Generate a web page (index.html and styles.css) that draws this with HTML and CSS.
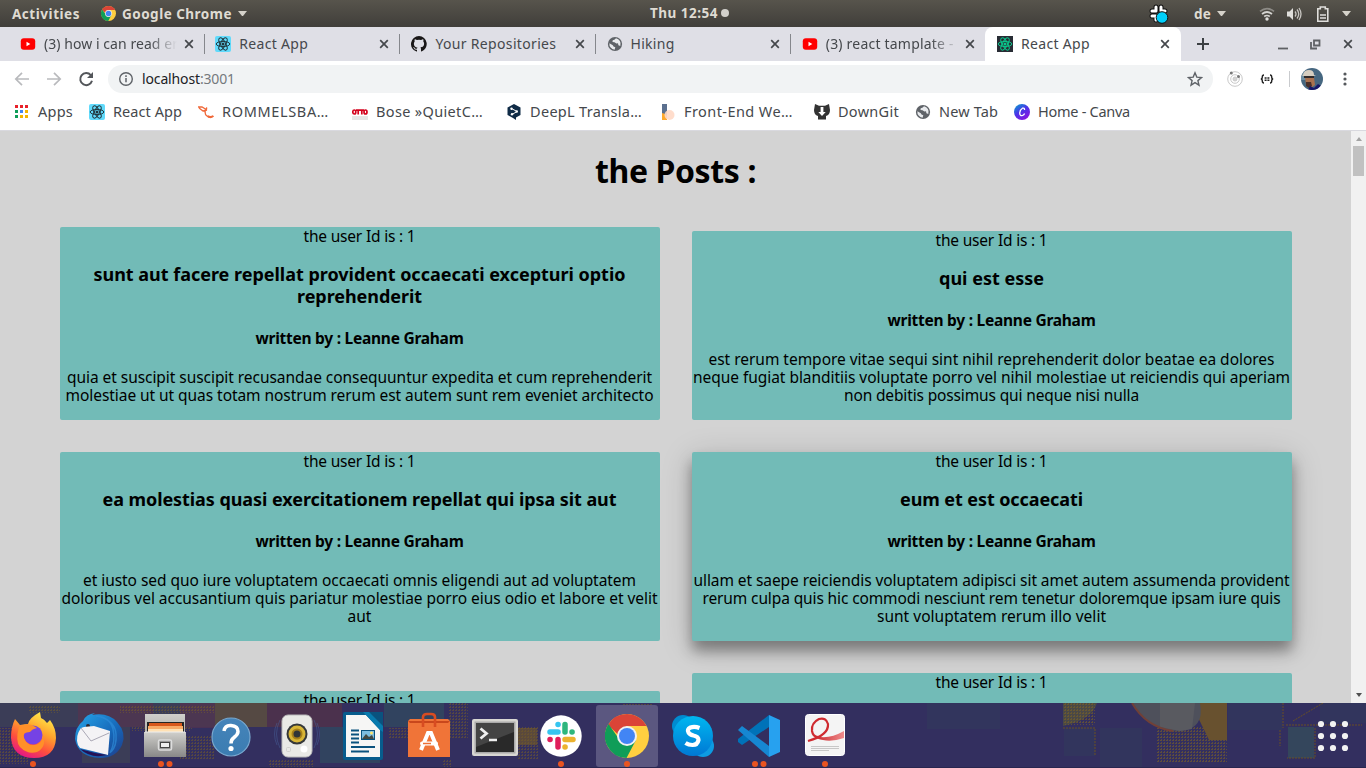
FILE: index.html
```html
<!DOCTYPE html>
<html lang="en">
<head>
<meta charset="utf-8">
<title>React App</title>
<link rel="stylesheet" href="styles.css">
</head>
<body>
<svg class="defs" width="0" height="0">
  <defs>
    <symbol id="react" viewBox="0 0 16 16">
      <g fill="none" stroke="currentColor" stroke-width="1">
        <ellipse cx="8" cy="8" rx="6.8" ry="2.6"/>
        <ellipse cx="8" cy="8" rx="6.8" ry="2.6" transform="rotate(60 8 8)"/>
        <ellipse cx="8" cy="8" rx="6.8" ry="2.6" transform="rotate(120 8 8)"/>
      </g>
      <circle cx="8" cy="8" r="1.5" fill="currentColor"/>
    </symbol>
    <symbol id="youtube" viewBox="0 0 16 16"><rect x=".8" y="2.3" width="14.4" height="11.4" rx="3" fill="#f00"/><path d="M6.5 5.8v4.4L10.3 8z" fill="#fff"/></symbol>
    <symbol id="close" viewBox="0 0 10 10"><path d="M1.2 1.2l7.6 7.6M8.8 1.2L1.2 8.8" stroke="#45484c" stroke-width="1.7"/></symbol>
    <symbol id="globe" viewBox="0 0 16 16"><circle cx="8" cy="8" r="7.1" fill="#5f6368"/><path d="M2.4 7.2L5.8 9.2 6.5 10.4 8.3 11.2 7.6 13.7A5.8 5.8 0 012.4 7.2zM9 2.3L7.4 3.8 5.7 4.3 5.5 6 7.5 6.2 9.4 7.4 11 7.2 11.4 9.3 13.3 9.9A5.8 5.8 0 009 2.3z" fill="#e8eaed"/></symbol>
    <symbol id="chrome" viewBox="0 0 44 44">
      <circle cx="22" cy="22" r="22" fill="#ffcf40"/>
      <path d="M3 11A22 22 0 0122 0 22 22 0 0141.6 12H22L12.5 20z" fill="#db4437"/>
      <path d="M3.500 10A22 22 0 0021.500 44l9.500-18-17-1z" fill="#0f9d58"/>
      <circle cx="22" cy="22" r="10" fill="#f1f1f1"/><circle cx="22" cy="22" r="8" fill="#4285f4"/>
    </symbol>
  </defs>
</svg>

<header class="topbar">
  <b class="activities" data-width="68">Activities</b>
  <svg class="app-icon" width="15" height="15"><use href="#chrome"/></svg>
  <b data-width="110">Google Chrome</b>
  <i class="caret"></i>
  <div class="clock"><b data-width="68">Thu 12:54</b><i></i></div>
  <div class="tray">
    <svg width="22" height="22" viewBox="0 0 22 22"><g stroke="#111" stroke-width="5" stroke-linecap="round"><path d="M8 4v4M13 4v4M4 8h4M14 8h3M4 13h4M8 15v2"/></g><g stroke="#fff" stroke-width="3" stroke-linecap="round"><path d="M8 4v4M13 4v4M4 8h4M14 8h3M4 13h4M8 15v2"/></g><circle cx="14" cy="14.5" r="5.8" fill="#00cffa" stroke="#111"/></svg>
    <b class="lang" data-width="17">de</b><i class="caret"></i>
    <svg class="wifi" width="16" height="16" viewBox="0 0 16 16" fill="none" stroke-width="1.7"><path d="M1 5.3Q8-.2 15 5.3" stroke="#8d8b86"/><path d="M3 8q5-4 10 0M5.2 10.5q2.8-2 5.6 0" stroke="#d5d4d1"/><circle cx="8" cy="13" r="1.7" fill="#dfdedb"/></svg>
    <svg class="volume" width="16" height="16" viewBox="0 0 16 16"><path d="M1 5.5h2.5L7 2v12l-3.500-3.500H1z" fill="#dfdedb"/><path d="M9 5.500q2 2.500 0 5M11 3.500q3.500 4.500 0 9M13 2q4 6 0 12" fill="none" stroke="#c7c5c1" stroke-width="1.300"/></svg>
    <svg class="battery" width="14" height="16" viewBox="0 0 14 16"><path d="M1.800 2.800h2.500V1h5v1.800h2.500v12.400h-10z" fill="none" stroke="#dfdedb" stroke-width="1.600"/><path d="M4 9h6M4 12h6" stroke="#dfdedb" stroke-width="1.500"/></svg>
    <i class="caret"></i>
  </div>
</header>

<nav class="tabs">
  <div class="tab"><svg width="16" height="16"><use href="#youtube"/></svg><span class="title fade"><span data-width="134">(3) how i can read er</span></span><svg class="x" width="10" height="10"><use href="#close"/></svg></div>
  <div class="tab"><svg class="react-blue" width="16" height="16"><use href="#react"/></svg><span class="title"><span data-width="69">React App</span></span><svg class="x" width="10" height="10"><use href="#close"/></svg></div>
  <div class="tab"><svg width="16" height="16" viewBox="0 0 16 16"><path fill="#191717" d="M8 0a8 8 0 00-2.500 15.600c.4.100.5-.2.500-.4v-1.500c-2.200.5-2.700-.9-2.700-.9-.4-.9-.9-1.200-.9-1.200-.7-.5.100-.5.100-.5.800.1 1.200.8 1.200.8.700 1.200 1.900.9 2.300.7.100-.5.300-.9.500-1.100-1.800-.2-3.600-.9-3.600-4 0-.9.300-1.600.8-2.100-.1-.2-.4-1 .1-2.100 0 0 .7-.2 2.200.8a7.500 7.500 0 014 0c1.500-1 2.200-.8 2.200-.8.400 1.100.2 1.900.1 2.100.5.600.8 1.300.8 2.100 0 3.100-1.900 3.700-3.700 3.900.3.300.6.800.6 1.500v2.200c0 .2.100.5.500.4A8 8 0 008 0z"/></svg><span class="title"><span data-width="121">Your Repositories</span></span><svg class="x" width="10" height="10"><use href="#close"/></svg></div>
  <div class="tab"><svg width="16" height="16"><use href="#globe"/></svg><span class="title"><span data-width="44">Hiking</span></span><svg class="x" width="10" height="10"><use href="#close"/></svg></div>
  <div class="tab"><svg width="16" height="16"><use href="#youtube"/></svg><span class="title fade"><span data-width="128">(3) react tamplate -</span></span><svg class="x" width="10" height="10"><use href="#close"/></svg></div>
  <div class="tab active"><svg class="react-dark" width="16" height="16"><use href="#react"/></svg><span class="title"><span data-width="69">React App</span></span><svg class="x" width="10" height="10"><use href="#close"/></svg></div>
  <svg class="new-tab" width="12" height="12" viewBox="0 0 12 12"><path d="M6 0v12M0 6h12" stroke="#3c4043" stroke-width="2"/></svg>
  <div class="window-buttons">
    <svg width="10" height="12" viewBox="0 0 10 12"><path d="M0 10.500h10" stroke="#5f6165" stroke-width="1.800"/></svg>
    <svg width="11" height="12" viewBox="0 0 11 12" fill="none" stroke="#5f6165"><path d="M4 2.500h5.500v5H4z" stroke-width="1.800"/><path d="M1 4v6.500h6" stroke-width="1.800"/></svg>
    <svg width="10" height="10"><use href="#close"/></svg>
  </div>
</nav>

<div class="toolbar">
  <svg width="32" height="16" viewBox="0 0 32 16" fill="none" stroke="#b9babd" stroke-width="1.700"><path d="M23 8H10M16 1.800L9.800 8l6.200 6.200"/></svg>
  <svg width="32" height="16" viewBox="0 0 32 16" fill="none" stroke="#b9babd" stroke-width="1.700"><path d="M9 8h13M16 1.800L22.200 8 16 14.200"/></svg>
  <svg width="32" height="16" viewBox="0 0 32 16" fill="none" stroke="#53565a" stroke-width="2"><path d="M20.800 4.200A6 6 0 1022 9.800"/><path d="M23 1v6h-6z" fill="#53565a" stroke="none"/></svg>
  <div class="omnibox">
    <svg width="16" height="16" viewBox="0 0 16 16"><circle cx="8" cy="8" r="6.300" fill="none" stroke="#5f6368" stroke-width="1.400"/><path d="M8 7v4.200M8 4.300V6" stroke="#5f6368" stroke-width="1.500"/></svg>
    <span class="url" data-width="93">localhost<em>:3001</em></span>
    <svg class="star" width="16" height="16" viewBox="0 0 16 16"><path d="M8 1.800l1.800 4.300 4.700.4-3.600 3.100 1.100 4.600L8 11.700l-4 2.500 1.100-4.600-3.600-3.100 4.700-.4z" fill="none" stroke="#5f6368" stroke-width="1.400"/></svg>
  </div>
  <svg class="ext" width="18" height="18" viewBox="0 0 18 18" fill="none" stroke="#c9c9c9"><circle cx="9" cy="9" r="7.300"/><circle cx="9" cy="9" r="4.300"/><circle cx="9" cy="9" r="2" fill="#d3d3d3"/><circle cx="5.300" cy="3" r="1.500" fill="#777" stroke="none"/><circle cx="12.500" cy="6.500" r="1.500" fill="#777" stroke="none"/></svg>
  <svg class="json" width="14" height="10" viewBox="0 0 14 10" fill="none" stroke="#222" stroke-width="1.400"><path d="M4 1Q2.300 1 2.300 3T.8 5q1.500 0 1.500 2T4 9M10 1q1.700 0 1.700 2t1.500 2q-1.500 0-1.500 2T10 9M4.600 4h2m.8 0h2M4.600 6.300h2m.8 0h2"/></svg>
  <i class="divider"></i>
  <svg class="avatar" width="22" height="22" viewBox="0 0 22 22"><rect width="22" height="22" fill="#466780"/><path d="M0 3h6v9H0z" fill="#6f8fa2"/><path d="M4 9h9l1 8-4 3-5-3z" fill="#a9714f"/><path d="M2 7q1-5 6-5t5 5l2 1H1z" fill="#d6cec0"/><path d="M3 8h10v2H3z" fill="#302b2b"/><path d="M5 14h5l1 4-3 2-3-2z" fill="#4a3029"/><path d="M7 22l2-4 4 2 4-4 5 3v3z" fill="#17176a"/></svg>
  <svg class="menu" width="4" height="14" viewBox="0 0 4 14" fill="#55585c"><circle cx="2" cy="2" r="1.600"/><circle cx="2" cy="7" r="1.600"/><circle cx="2" cy="12" r="1.600"/></svg>
</div>

<div class="bookmarks">
  <div class="mark w-apps"><svg width="16" height="16" viewBox="0 0 16 16"><path fill="#e8212a" d="M1 1h3v3H1zM6 1h3v3H6zM11 1h3v3h-3z"/><path fill="#0f9d58" d="M1 6h3v3H1zM1 11h3v3H1z"/><path fill="#4285f4" d="M6 6h3v3H6z"/><path fill="#f4b400" d="M11 6h3v3h-3zM6 11h3v3H6zM11 11h3v3h-3z"/></svg><span data-width="35">Apps</span></div>
  <div class="mark w-react"><svg class="react-blue" width="16" height="16"><use href="#react"/></svg><span data-width="69">React App</span></div>
  <div class="mark w-long"><svg width="16" height="16" viewBox="0 0 16 16" fill="none" stroke="#f0693a" stroke-width="1.300"><path d="M0 3h4l5 3M1 4l4 3 4-1M9 3.500Q5 9 9 12t6 0"/><path d="M9.500 12q3 2 6 0" stroke-width="2"/></svg><span data-width="107">ROMMELSBA…</span></div>
  <div class="mark w-long"><svg width="16" height="16" viewBox="0 0 16 16"><path d="M0 12h16v4H0z" fill="#e6e6e6"/><g fill="none" stroke="#d4021d" stroke-width="1.700"><ellipse cx="2.300" cy="8" rx="1.500" ry="2"/><ellipse cx="13.500" cy="8" rx="1.500" ry="2"/><path d="M4 6.200h8M6.200 6v4.600M9.800 6v4.600"/></g></svg><span data-width="107">Bose »QuietC…</span></div>
  <div class="mark w-long"><svg width="16" height="16" viewBox="0 0 16 16"><path d="M8 0l6.500 3.500v7.500L10 13.500V16l-3-2-5.500-3V3.500z" fill="#0f2b46"/><path d="M5.500 4.500l5.500 3-5 3" fill="none" stroke="#fff"/><g fill="#fff"><circle cx="5.500" cy="4.700" r="1.200"/><circle cx="10.800" cy="7.500" r="1.200"/><circle cx="6" cy="10.300" r="1.200"/></g></svg><span data-width="112">DeepL Transla…</span></div>
  <div class="mark w-long"><svg width="16" height="16" viewBox="0 0 16 16"><path d="M2 0h5v16H2z" fill="#5b708f"/><path d="M2 9q6 1 5 7H2z" fill="#ffa92d"/><circle cx="9.500" cy="11" r="5" fill="#ffd9c7" opacity=".9"/></svg><span data-width="109">Front-End We…</span></div>
  <div class="mark w-downgit"><svg width="16" height="16" viewBox="0 0 16 16"><path d="M1 0l4 1.700h6L15 0l1 6q0 5-4 6v3.500H4V12Q0 11 0 6z" fill="#333"/><path d="M6.600 3h2.800v5h2.300L8 12 4.300 8h2.300z" fill="#fff"/></svg><span data-width="61">DownGit</span></div>
  <div class="mark w-newtab"><svg width="16" height="16"><use href="#globe"/></svg><span data-width="59">New Tab</span></div>
  <div class="mark"><svg width="16" height="16" viewBox="0 0 16 16"><defs><linearGradient id="canva" x1="0" y1="0" x2=".7" y2="1"><stop stop-color="#0ac"/><stop offset=".5" stop-color="#4a35e8"/><stop offset="1" stop-color="#8a13e0"/></linearGradient></defs><circle cx="8" cy="8" r="8" fill="url(#canva)"/><path d="M10.600 6Q10.500 3.500 8.400 4.200 6 5.500 5.700 9q.2 3.300 2.800 2.500 1.500-.6 2.100-2" fill="none" stroke="#fff" stroke-width="1.300"/></svg><span data-width="92">Home - Canva</span></div>
</div>

<div class="viewport">
  <main class="page">
    <h1><span data-width="161">the Posts :</span></h1>
    <div class="posts">
      <article class="post">
        <div><span data-width="112">the user Id is : 1</span></div>
        <h3><span data-width="532">sunt aut facere repellat provident occaecati excepturi optio</span><br><span data-width="125">reprehenderit</span></h3>
        <h4><span data-width="208">written by : Leanne Graham</span></h4>
        <p><span data-width="585">quia et suscipit suscipit recusandae consequuntur expedita et cum reprehenderit</span><br><span data-width="588">molestiae ut ut quas totam nostrum rerum est autem sunt rem eveniet architecto</span></p>
      </article>
      <article class="post">
        <div><span data-width="112">the user Id is : 1</span></div>
        <h3><span data-width="105">qui est esse</span></h3>
        <h4><span data-width="208">written by : Leanne Graham</span></h4>
        <p><span data-width="566">est rerum tempore vitae sequi sint nihil reprehenderit dolor beatae ea dolores</span><br><span data-width="597">neque fugiat blanditiis voluptate porro vel nihil molestiae ut reiciendis qui aperiam</span><br><span data-width="295">non debitis possimus qui neque nisi nulla</span></p>
      </article>
      <article class="post">
        <div><span data-width="112">the user Id is : 1</span></div>
        <h3><span data-width="514">ea molestias quasi exercitationem repellat qui ipsa sit aut</span></h3>
        <h4><span data-width="208">written by : Leanne Graham</span></h4>
        <p><span data-width="553">et iusto sed quo iure voluptatem occaecati omnis eligendi aut ad voluptatem</span><br><span data-width="596">doloribus vel accusantium quis pariatur molestiae porro eius odio et labore et velit</span><br><span data-width="24">aut</span></p>
      </article>
      <article class="post hovered">
        <div><span data-width="112">the user Id is : 1</span></div>
        <h3><span data-width="183">eum et est occaecati</span></h3>
        <h4><span data-width="208">written by : Leanne Graham</span></h4>
        <p><span data-width="596">ullam et saepe reiciendis voluptatem adipisci sit amet autem assumenda provident</span><br><span data-width="578">rerum culpa quis hic commodi nesciunt rem tenetur doloremque ipsam iure quis</span><br><span data-width="229">sunt voluptatem rerum illo velit</span></p>
      </article>
      <article class="post short"><div><span data-width="112">the user Id is : 1</span></div></article>
      <article class="post tall"><div><span data-width="112">the user Id is : 1</span></div></article>
    </div>
  </main>
  <div class="scrollbar"><i class="up"></i><i class="thumb"></i><i class="down"></i></div>
</div>

<footer class="dock">
  <svg class="wallpaper" width="1366" height="65" viewBox="0 0 1366 65">
    <defs>
      <pattern id="weave" width="3" height="3" patternUnits="userSpaceOnUse"><path d="M0 0h1v2H0zM2 1h1v1H2z" fill="#81651f"/></pattern>
    </defs>
    <rect width="1366" height="65" fill="#332f5f"/>
    <path d="M0 0h215v24H130v36h-48V24H0z" fill="#3b3d57"/>
    <path d="M78 0h75v24H78zM180 0h35v25h-35z" fill="#56334e" opacity=".65"/>
    <path d="M215 0h52v24h-52z" fill="#554943"/><path d="M267 0h75v24h-75z" fill="#4b314d"/>
    <path d="M320 24h60v36h-60zM384 0h60v24h-60z" fill="#31435f"/>
    <path d="M0 25h28v36H0zM28 2h32v8H28zM120 3h95v7h-95zM132 23h60v5h-60zM180 32h35v25h-35zM268 57h45v8h-45zM388 25h80v10h-80zM448 0h20v25h-20zM518 24h20v32h-20zM443 56h8v9h-8zM622 1h30v16h-30z" fill="url(#weave)" opacity=".45"/>
    <path d="M518 25h19v17h-19z" fill="#745b24" opacity=".6"/>
    <path d="M1063 0h34q-5 17-34 23z" fill="#4a4846"/><path d="M1063 0h32v22h-32zM1157 24h70v35h-70z" fill="url(#weave)" opacity=".55"/>
    <path d="M1191 0h36v37h-18z" fill="#68512f"/>
    <path d="M1064 25h31v28h-31zM1100 25h42v40h-42zM1228 0h54v27h-54zM927 0h73v26h-73zM1320 0h46v20h-46z" fill="#30425c" opacity=".35"/>
    <path d="M1288 24h26v31h-26z" fill="#34465c"/>
    <path d="M1132 0q16 28 48 28 25-2 20-28z" fill="#4e505b"/><path d="M1160 0h35l-3 26-12 2-20-4z" fill="#595a60"/><path d="M1132 0q14 24 41 28" fill="none" stroke="#704037" stroke-width="2"/>
    <path d="M1286 22h76M1283 0v25M1315 25v30h-28M1293 18l30-18M1063 25h32v28M1280 27v16" fill="none" stroke="#685024" stroke-dasharray="2 1"/>
    <path d="M0 64.500h1366" stroke="#29264f"/>
  </svg>

  <div class="launcher dots-1"><svg width="66" height="65" viewBox="0 0 66 65"><defs><linearGradient id="fox" x1=".8" y1="0" x2=".3" y2="1"><stop stop-color="#fff44f"/><stop offset=".4" stop-color="#ffa22c"/><stop offset=".7" stop-color="#ff503d"/><stop offset="1" stop-color="#e31587"/></linearGradient></defs><path d="M15 16l5 6q5-1 8-1 1-6 12-12l1 6q3 1 6 5l3-3q6 8 6 18-1 20-22 20-21 0-23-20 0-11 4-19z" fill="url(#fox)"/><circle cx="33" cy="32" r="9.500" fill="#7542e5"/><path d="M19 24q6-4 13-2l5 3q-5 1-7 4-8 0-6 6 3 8 11 7 8-2 8-10 4 12-6 17-9 3-17-5-5-6-1-20z" fill="#ff9029"/></svg></div>
  <div class="launcher"><svg width="66" height="65" viewBox="0 0 66 65"><defs><linearGradient id="bird" x2="1" y2="1"><stop stop-color="#26a7eb"/><stop offset=".6" stop-color="#1666b7"/><stop offset="1" stop-color="#203b87"/></linearGradient></defs><path d="M9 36q0-12 8-18 3-7 12-8l-3 2q16-3 25 7 10 11 5 23-6 13-22 13-22-1-25-19z" fill="url(#bird)"/><path d="M30 13q14 1 17 13t-3 24M35 14q14 5 15 17t-5 18" fill="none" stroke="#2e8bd8" stroke-width="1.500" opacity=".7"/><circle cx="22" cy="23" r="2" fill="#2d2930"/><path d="M15 25q-6 8-3 17l2 3 28 7 2-24-16-5-10 1z" fill="#f4f3f5"/><path d="M15 25l10 13 18-8" fill="none" stroke="#aaa8b5"/><path d="M14 46q11 10 27 6l-12-2z" fill="#251254"/></svg></div>
  <div class="launcher dots-2"><svg width="66" height="65" viewBox="0 0 66 65"><defs><linearGradient id="metal" x2="0" y2="1"><stop stop-color="#d0cfcb"/><stop offset="1" stop-color="#888"/></linearGradient></defs><path d="M13 11h40v43H13z" fill="url(#metal)"/><path d="M15 19h37v10H15z" fill="#252525"/><path d="M17 20h33v9H17z" fill="#d8581d"/><path d="M16 23h35v6H16z" fill="#f8aa67"/><path d="M16 26h35v3H16z" fill="#ffe1b4"/><path d="M12 29h42v25H12z" fill="url(#metal)"/><path d="M13 29h40" stroke="#eee"/><rect x="26.500" y="37" width="13" height="10" rx="1.500" fill="#999" stroke="#ddd" stroke-width="1.500"/><rect x="28.500" y="39.500" width="9" height="5" fill="#eee" stroke="#444"/></svg></div>
  <div class="launcher"><svg width="66" height="65" viewBox="0 0 66 65"><defs><linearGradient id="helpg" x2="0" y2="1"><stop stop-color="#4584ba"/><stop offset="1" stop-color="#3b7cb1"/></linearGradient></defs><circle cx="33" cy="34" r="19" fill="url(#helpg)" stroke="#78a8cf" stroke-width="1.200"/><path d="M26 28q1-6 7-5.500 7 .5 7 6 0 3-4 6-3 2-3 6" fill="none" stroke="#fff" stroke-width="3.500"/><circle cx="33" cy="45.500" r="2.600" fill="#fff"/></svg></div>
  <div class="launcher"><svg width="66" height="65" viewBox="0 0 66 65"><g fill="none" stroke="#4a679f" opacity=".45"><path d="M16 17q-7 14 0 28M50 17q7 14 0 28M13 20q-5 11 0 22M53 20q5 11 0 22"/></g><rect x="18" y="12" width="30" height="42" rx="6" fill="#e9e9e6" stroke="#bbb"/><circle cx="33" cy="31" r="10.500" fill="#35383a"/><circle cx="33" cy="31" r="8.500" fill="#d8b536"/><circle cx="33" cy="31" r="5.500" fill="#a67f19"/><circle cx="33" cy="31" r="3.500" fill="#303438"/><circle cx="40" cy="46" r="3.500" fill="#fff"/><rect x="22.500" y="44.500" width="4" height="4" rx="1" fill="none" stroke="#d1d1ce"/></svg></div>
  <div class="launcher"><svg width="66" height="65" viewBox="0 0 66 65"><rect x="13" y="9" width="40" height="48" rx="2" fill="#075c8d"/><path d="M16 12h20l14 15v27H16z" fill="#f6f6f5"/><path d="M33 9h20v20l-3-2-14-15z" fill="#087aad"/><path d="M39 9h14v14z" fill="#0a527e"/><path d="M21 27.500h8M21 31.500h8M21 35.500h8M21 39.500h8M21 44h24M21 48.500h18" stroke="#0a527e" stroke-width="1.800"/><rect x="31.500" y="27.500" width="13" height="9" fill="#7dbde0" stroke="#0a527e"/><path d="M32 36l4-5 3 3 3-2 2 4z" fill="#424842"/><circle cx="41.500" cy="30" r="1.500" fill="#ffe46b"/></svg></div>
  <div class="launcher"><svg width="66" height="65" viewBox="0 0 66 65"><path d="M12 18l2-2h38l2 2v36H12z" fill="#f07438"/><path d="M12 18h42l-2 2H14z" fill="#c9471c"/><path d="M27 24V14q0-3 4-3h4q4 0 4 3v10" fill="none" stroke="#d84c21" stroke-width="2.600"/><path d="M25 47l7-17h3l7 17" fill="none" stroke="#fff" stroke-width="4"/><rect x="24" y="38.500" width="18" height="4" rx="2" fill="#fff"/><path d="M27 40.500h8" stroke="#ed6f35" stroke-width="1.500"/></svg></div>
  <div class="launcher"><svg width="66" height="65" viewBox="0 0 66 65"><rect x="10" y="16" width="46" height="37" rx="2" fill="#d8d7d3"/><rect x="12.500" y="18.500" width="41" height="32" fill="#aaa"/><rect x="14" y="20" width="38" height="29" fill="#292929"/><path d="M14 20h38v9L14 44z" fill="#444"/><path d="M18.500 25.500l6 5-6 5" fill="none" stroke="#eee" stroke-width="2.800"/><path d="M27 37h8" stroke="#eee" stroke-width="2.500"/></svg></div>
  <div class="launcher dots-1"><svg width="66" height="65" viewBox="0 0 66 65"><circle cx="33" cy="33" r="20.700" fill="#fff"/><g stroke-width="5.500" stroke-linecap="round"><path d="M22 29h8M30 21.500h.1" stroke="#36c5f0"/><path d="M37 21.500V29M44 29h.1" stroke="#2eb67d"/><path d="M30 36.500V44M22 36.500h.1" stroke="#e01e5a"/><path d="M37 36.500h8M37 44h.1" stroke="#ecb22e"/></g></svg></div>
  <div class="launcher dots-1 focused"><svg width="66" height="65" viewBox="0 0 66 65"><svg x="11" y="11" width="44" height="44"><use href="#chrome"/></svg></svg></div>
  <div class="launcher"><svg width="66" height="65" viewBox="0 0 66 65"><defs><linearGradient id="sky" x2="0" y2="1"><stop stop-color="#00b7f0"/><stop offset="1" stop-color="#0078d4"/></linearGradient></defs><circle cx="23" cy="23" r="11" fill="#008bd0"/><circle cx="43" cy="43" r="11" fill="#0d9be2"/><circle cx="33" cy="33" r="20" fill="url(#sky)"/><path d="M39.500 25q-5-2-9-.5-4 2-2 5 1 2 5 3 5 1 5 4.500-1 5-6 5-4 0-7-2" fill="none" stroke="#fff" stroke-width="4.200"/></svg></div>
  <div class="launcher dots-2"><svg width="66" height="65" viewBox="0 0 66 65"><path d="M43 12v12L16 42l-4-3v-3z" fill="#0072b8"/><path d="M12 27l4-4 27 20v11z" fill="#1687d2"/><path d="M43 12l11 5v32l-11 5z" fill="#27a1ef"/></svg></div>
  <div class="launcher dots-1"><svg width="66" height="65" viewBox="0 0 66 65"><defs><linearGradient id="ribbon"><stop stop-color="#c9252b"/><stop offset="1" stop-color="#ef8c8c"/></linearGradient></defs><rect x="13.500" y="11.500" width="39" height="41" rx="3" fill="#f4f4f4" stroke="#fff"/><path d="M24 33q12 4 28-5v7q-12 4-21 2-6-1-8-3z" fill="url(#ribbon)"/><path d="M16 38Q37 32 36 21q-2-7-9-5-8 4-7 12 1 6 6 6" fill="none" stroke="#cf2b30" stroke-width="2.200"/><path d="M19 43.500h28M19 45.500h28M19 47.500h18" stroke="#c7c7c7"/></svg></div>
  <svg class="all-apps" width="32" height="32" viewBox="0 0 32 32" fill="#f2f2f2"><circle cx="4" cy="4" r="3.100"/><circle cx="16" cy="4" r="3.100"/><circle cx="28" cy="4" r="3.100"/><circle cx="4" cy="16" r="3.100"/><circle cx="16" cy="16" r="3.100"/><circle cx="28" cy="16" r="3.100"/><circle cx="4" cy="28" r="3.100"/><circle cx="16" cy="28" r="3.100"/><circle cx="28" cy="28" r="3.100"/></svg>
</footer>
<script src="fit.js"></script>
</body>
</html>
```
FILE: styles.css
```css
* { box-sizing: border-box; }
body {
  margin: 0;
  width: 1366px;
  height: 768px;
  overflow: hidden;
  display: flex;
  flex-direction: column;
  font-family: "Noto Sans", "Open Sans", sans-serif;
}
svg { display: block; flex: none; }
.defs { display: none; }
[data-width] { display: inline-block; white-space: pre; }

/* Desktop panel */
.topbar {
  position: relative;
  flex: none;
  height: 27px;
  display: flex;
  align-items: center;
  padding-left: 12px;
  background: linear-gradient(#57544c, #403e3a);
  color: #dfdbd2;
  font-size: 13.500px;
  line-height: 26px;
}
.app-icon { margin: 0 6px 0 21px; }
.caret {
  width: 9px;
  border: 4.5px solid transparent;
  border-top: 5px solid #d5d2ca;
  border-bottom: 0;
  margin-left: 6px;
}
.clock {
  position: absolute;
  left: 650px;
  top: 0;
  display: flex;
  align-items: center;
  gap: 3px;
}
.clock i { width: 8px; height: 8px; border-radius: 50%; background: #d2d0cb; }
.tray { margin-left: auto; display: flex; align-items: center; padding-right: 15px; }
.lang { margin-left: 24px; }
.wifi { margin-left: 33px; }
.volume { margin-left: 11px; }
.battery { margin-left: 14px; }
.battery + .caret { margin-left: 12px; }

/* Tab strip */
.tabs {
  flex: none;
  height: 34px;
  display: flex;
  align-items: stretch;
  padding-left: 10px;
  background: #dfdfe6;
}
.tab {
  position: relative;
  width: 195.200px;
  display: flex;
  align-items: center;
  padding: 0 11px 0 10px;
  font-size: 14px;
  color: #45484c;
}
.tab:nth-child(n+3) { padding-left: 11px; }
.tab:not(.active)::after {
  content: "";
  position: absolute;
  right: 0;
  top: 7px;
  width: 1px;
  height: 20px;
  background: #85878c;
}
.tab:nth-child(5)::after { display: none; }
.title { width: 133px; margin-left: 8px; margin-right: 5px; overflow: hidden; line-height: 22px; }
.tab .x { margin-left: auto; }
.fade { -webkit-mask-image: linear-gradient(90deg, #000 105px, transparent 133px); mask-image: linear-gradient(90deg, #000 105px, transparent 133px); }
.active { width: 196px; margin-left: -1px; background: #fff; border-radius: 8px 8px 0 0; }
.tab.active { padding-left: 12px; }
.react-blue { background: #61dafb; color: #20353c; border-radius: 2px; }
.react-dark { background: #282c34; color: #09c98d; }
.new-tab { margin: 11px 0 0 16px; }
.window-buttons { margin-left: auto; display: flex; align-items: center; gap: 22px; padding-right: 13px; }

/* Address row */
.toolbar {
  flex: none;
  height: 36px;
  display: flex;
  align-items: center;
  padding-left: 6px;
  background: #fff;
}
.omnibox {
  width: 1105px;
  height: 28px;
  margin-left: 6px;
  display: flex;
  align-items: center;
  padding: 0 10px;
  border-radius: 14px;
  background: #f1f3f4;
  font-size: 14px;
  color: #202124;
}
.url { margin-left: 8px; padding-bottom: 1px; }
.url em { font-style: normal; color: #75797d; }
.star { margin-left: auto; }
.ext { margin-left: 13px; }
.json { margin-left: 16px; }
.divider { width: 1px; height: 16px; margin-left: 15px; background: #c9cbce; }
.avatar { margin-left: 11px; border-radius: 50%; }
.menu { margin-left: 20px; }

/* Bookmarks bar */
.bookmarks {
  flex: none;
  height: 34px;
  display: flex;
  align-items: center;
  padding: 0 0 3px 14px;
  background: #fff;
  border-bottom: 1px solid #d9d9df;
  font-size: 14.500px;
  line-height: 20px;
  color: #45484c;
}
.mark { display: flex; align-items: center; gap: 8px; }
.mark span { padding-bottom: 2px; }
.w-apps { width: 75px; }
.w-react { width: 109px; }
.w-long { width: 154px; }
.w-downgit { width: 101px; }
.w-newtab { width: 99px; }

/* Page */
.viewport { flex: none; height: 572px; display: flex; overflow: hidden; }
.page { flex: 1; background: #d3d3d3; text-align: center; color: #000; overflow: hidden; }
h1 { margin: 21px 0 0; font-size: 32px; line-height: 37px; }
.posts {
  display: grid;
  grid-template-columns: 600px 600px;
  gap: 32px;
  align-items: end;
  padding: 38px 0 0 59.500px;
}
.post {
  height: max-content;
  border-radius: 2px;
  background: #72bbb7;
  font-size: 15.500px;
  line-height: 18px;
}
.post h3 { margin: 18.72px 0 21.28px; font-size: 18px; line-height: 21.800px; }
.post h4 { margin: 21.28px 0; font-size: 15.500px; line-height: 18px; }
.post p { margin: 0; padding-bottom: 16px; }
.hovered { box-shadow: 0 10px 14px rgba(0, 0, 0, .35), 0 6px 32px rgba(0, 0, 0, .18); }
.short { height: 171px; }
.tall { height: 189px; }
.scrollbar {
  flex: none;
  width: 15px;
  display: flex;
  flex-direction: column;
  align-items: center;
  background: #f1f1f1;
}
.up { margin-top: 6px; border: 3.500px solid transparent; border-top: 0; border-bottom: 4px solid #a3a3a3; }
.thumb { width: 11px; height: 30px; margin-top: 5px; background: #c1c1c1; }
.down { margin: auto 0 6px; border: 3.500px solid transparent; border-bottom: 0; border-top: 4px solid #505050; }

/* Dock */
.dock { position: relative; flex: none; height: 65px; display: flex; background: #332f5f; }
.wallpaper { position: absolute; left: 0; top: 0; }
.launcher { position: relative; width: 66px; height: 65px; }
.launcher > svg { position: relative; }
.focused::before {
  content: "";
  position: absolute;
  left: 2px;
  top: 2px;
  width: 62px;
  height: 62px;
  border-radius: 3px;
  background: #5b5780;
}
.dots-1::after, .dots-2::after {
  content: "";
  position: absolute;
  left: 30px;
  top: 58px;
  width: 6px;
  height: 6px;
  border-radius: 50%;
  background: #e95420;
}
.dots-2::after { left: 25.500px; box-shadow: 8.500px 0 #e95420; }
.all-apps { position: relative; margin: 17px 17px 0 auto; }
```
FILE: fit.js
```javascript
// Tracks each label so that it fills its intended width.
document.querySelectorAll("[data-width]").forEach(function (el) {
  var target = Number(el.dataset.width);
  var natural = el.getBoundingClientRect().width;
  var spacing = (target - natural) / el.textContent.length;
  el.style.letterSpacing = spacing.toFixed(3) + "px";
});
```
